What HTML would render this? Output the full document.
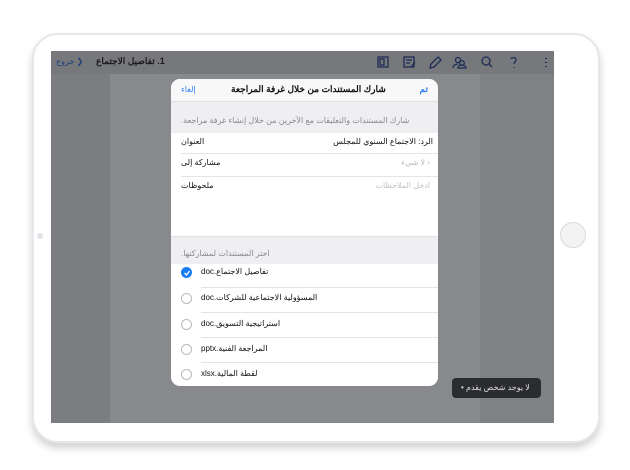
<html><head><style>
body{margin:0;width:630px;height:470px;background:#fff;position:relative;overflow:hidden;font-family:"Liberation Sans","Noto Sans CJK SC",sans-serif}
.frame{position:absolute;left:32px;top:33px;width:564px;height:406px;border:2px solid #e6e7ea;border-radius:26px;background:#fff;box-shadow:0 5px 8px rgba(0,0,0,.18)}
.screen{position:absolute;left:51px;top:51px;width:503px;height:372px;background:#808185;overflow:hidden}
.tb{position:absolute;left:0;top:0;width:503px;height:23px;background:#77787c}
.side{position:absolute;left:0;top:23px;width:59px;height:349px;background:#7c7d81}
.page{position:absolute;left:59px;top:23px;width:370px;height:349px;background:#88898d}
.t{position:absolute;font-size:9px;white-space:nowrap;direction:rtl}
.modal{position:absolute;left:120px;top:28px;width:267px;height:307px;background:#fff;border-radius:9px;overflow:hidden}
.row{position:absolute;left:0;width:267px;font-size:8px}
.c{position:absolute;left:10px;width:11px;height:11px;border-radius:50%;border:1px solid #b9b9bd;box-sizing:border-box}
.line{position:absolute;left:0;width:257px;height:1px;background:#e4e4e7}
</style></head><body>
<div class="frame"></div>
<div style="position:absolute;left:37px;top:233px;width:6px;height:6px;border-radius:50%;background:#e2e3e6"></div>
<div style="position:absolute;left:560px;top:222px;width:26px;height:26px;border-radius:50%;background:#f3f3f4;border:1px solid #dadbde;box-sizing:border-box"></div>
<div class="screen">
<div class="tb"></div><div class="side"></div><div class="page"></div>
<div class="t" style="left:5px;top:6px;color:#1e3f7a;font-size:8px">❮ خروج</div>
<div class="t" style="left:45px;top:5px;color:#1c1c1e;font-weight:bold;font-size:9px">1. تفاصيل الاجتماع</div>
<svg style="position:absolute;left:325px;top:4px" width="175" height="16" fill="none" stroke="#1c2d55" stroke-width="1.3">
<rect x="2" y="2" width="10" height="10"/><rect x="4" y="4" width="4" height="6"/>
<rect x="28" y="2" width="10" height="10"/><path d="M30 5h6M30 8h4M35 12l4-5"/>
<path d="M54 13l1-4 7-7 3 3-7 7z"/>
<circle cx="82" cy="5" r="2.5"/><circle cx="86" cy="8" r="2.3"/><path d="M77 13c0-3 3-4 5-4M82 13c0-2 2-3 4-3s4 1 4 3z"/>
<circle cx="110" cy="6" r="4"/><path d="M113 9l3 3"/>
<path d="M135 4c0-2 5-2 5 1 0 2-2 2-2 4M138 12v1"/>
<path d="M170 3v1M170 7v1M170 11v1" stroke-width="2"/>
</svg>
<div style="position:absolute;left:401px;top:327px;width:89px;height:20px;background:#2b2c30;border-radius:4px"></div>
<div class="t" style="left:410px;top:332px;color:#ddd;font-size:8px">لا يوجد شخص يقدم •</div>
<div class="modal">
<div class="row" style="top:0;height:22px;background:#f8f8f8;border-bottom:1px solid #e2e2e5"></div>
<div class="t" style="left:10px;top:6px;color:#2f7cf6;font-size:8px">إلغاء</div>
<div class="t" style="left:60px;top:5px;font-weight:bold;font-size:9px;color:#111">شارك المستندات من خلال غرفة المراجعة</div>
<div class="t" style="right:10px;top:5px;color:#2f7cf6;font-size:9px;font-weight:bold">تم</div>
<div class="row" style="top:23px;height:31px;background:#efeff2"></div>
<div class="t" style="left:10px;top:37px;color:#8a8a8e;font-size:8px">شارك المستندات والتعليقات مع الآخرين من خلال إنشاء غرفة مراجعة.</div>
<div class="t" style="right:5px;top:58px;font-size:8px;color:#111">الرد: الاجتماع السنوي للمجلس</div>
<div class="t" style="left:10px;top:58px;font-size:8px;color:#111">العنوان</div>
<div class="line" style="top:74px;left:10px"></div>
<div class="t" style="right:8px;top:79px;font-size:8px;color:#bbb">‹ لا شيء</div>
<div class="t" style="left:10px;top:79px;font-size:8px;color:#111">مشاركة إلى</div>
<div class="line" style="top:97px;left:10px"></div>
<div class="t" style="right:8px;top:102px;font-size:8px;color:#c2c2c4">ادخل الملاحظات</div>
<div class="t" style="left:10px;top:102px;font-size:8px;color:#111">ملحوظات</div>
<div class="row" style="top:157px;height:27px;background:#efeff2;border-top:1px solid #e2e2e5"></div>
<div class="t" style="left:10px;top:170px;color:#8a8a8e;font-size:8px">اختر المستندات لمشاركتها.</div>
<div class="c" style="top:188px;background:#1a7cf5;border:none"></div>
<svg style="position:absolute;left:12px;top:190px" width="8" height="8"><path d="M1.5 4l2 2 3-4" stroke="#fff" stroke-width="1.3" fill="none"/></svg>
<div class="t" style="left:30px;top:188px;font-size:8px;color:#111">تفاصيل الاجتماع.doc</div>
<div class="line" style="top:208px;left:30px;width:237px"></div>
<div class="c" style="top:214px"></div>
<div class="t" style="left:30px;top:214px;font-size:8px;color:#111">المسؤولية الاجتماعية للشركات.doc</div>
<div class="line" style="top:233px;left:30px;width:237px"></div>
<div class="c" style="top:240px"></div>
<div class="t" style="left:30px;top:240px;font-size:8px;color:#111">استراتيجية التسويق.doc</div>
<div class="line" style="top:258px;left:30px;width:237px"></div>
<div class="c" style="top:265px"></div>
<div class="t" style="left:30px;top:265px;font-size:8px;color:#111">المراجعة الفنية.pptx</div>
<div class="line" style="top:283px;left:30px;width:237px"></div>
<div class="c" style="top:290px"></div>
<div class="t" style="left:30px;top:290px;font-size:8px;color:#111">لقطة المالية.xlsx</div>
</div>
</div>
</body></html>
